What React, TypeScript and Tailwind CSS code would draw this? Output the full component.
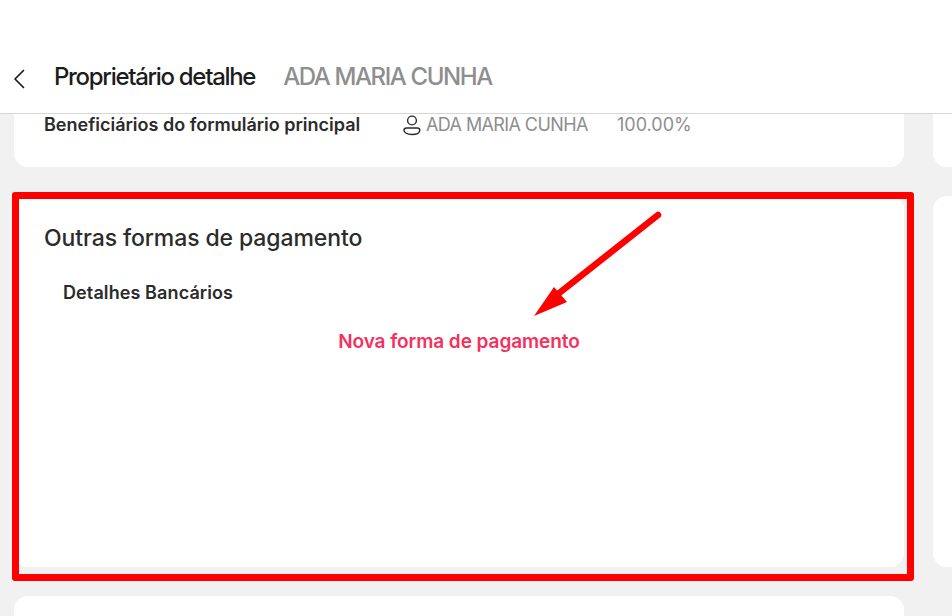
const font = "font-['Inter',sans-serif]";

const UserIcon = () => (
  <svg width="20" height="22" viewBox="0 0 20 22" fill="none" stroke="#2b2b2b" strokeWidth="1.4" className="shrink-0">
    <circle cx="10" cy="6.5" r="4.4" />
    <path d="M2 16.2c0-1.4 1-2.2 2.4-2.2h11c1.4 0 2.400.8 2.400 2.200 0 2.400-2.900 4.300-7.900 4.300s-7.900-1.900-7.900-4.300z" />
  </svg>
);

const BackIcon = () => (
  <svg width="12" height="20" viewBox="0 0 12 20" fill="none" stroke="#1c1c1c" strokeWidth="1.7" strokeLinecap="round" strokeLinejoin="round" className="mb-[2px]">
    <path d="M10.500 1.500 2 10l8.500 8.500" />
  </svg>
);

const Annotation = () => (
  <>
    <div className="absolute left-[-2px] right-[-10px] top-[-4px] bottom-[-14px] border-[7px] border-[#ff0000] rounded-[3px] pointer-events-none" />
    <svg className="absolute left-[491px] top-[4px] pointer-events-none" width="170" height="130" viewBox="0 0 170 130" fill="none">
      <path d="M153 15 53 94" stroke="#ff0000" strokeWidth="6.500" strokeLinecap="round" />
      <path d="M29 116 49 87 62 102z" fill="#ff0000" />
    </svg>
  </>
);

export default function App() {
  return (
    <div className={`${font} w-[952px] h-[616px] overflow-hidden bg-[#f1f1f1] flex flex-col`}>
      <header className="h-[114px] shrink-0 bg-white border-b border-[#d6d6d6] flex items-end pb-[22px] pl-[13px]">
        <BackIcon />
        <h1 className="ml-[29px] text-[24px] leading-[28px] font-medium tracking-[-1.3px] text-[#1c1c1c]">
          Proprietário detalhe
        </h1>
        <span className="ml-[28px] text-[24px] leading-[28px] font-medium tracking-[-1.4px] text-[#8e8e8e]">
          ADA MARIA CUNHA
        </span>
      </header>

      <div className="flex gap-[29px] pl-[14px] flex-1 min-h-0">
        <div className="w-[890px] shrink-0 flex flex-col gap-[29px]">
          <section className="h-[53px] shrink-0 bg-white rounded-b-[14px] flex items-start pl-[30px]">
            <span className="text-[18px] leading-[22px] font-semibold text-[#2b2b2b] w-[358px]">
              Beneficiários do formulário principal
            </span>
            <UserIcon />
            <span className="ml-[4px] text-[18px] leading-[22px] tracking-[-0.6px] text-[#8e8e8e] w-[191px]">
              ADA MARIA CUNHA
            </span>
            <span className="text-[18px] leading-[22px] text-[#8e8e8e]">100.00%</span>
          </section>

          <section className="relative h-[371px] shrink-0 bg-white rounded-[14px] pt-[28px] pl-[30px]">
            <h2 className="text-[23px] leading-[28px] font-medium tracking-[-0.1px] text-[#2b2b2b]">
              Outras formas de pagamento
            </h2>
            <p className="mt-[30px] ml-[19px] text-[18px] leading-[22px] font-semibold tracking-[0.1px] text-[#2b2b2b]">
              Detalhes Bancários
            </p>
            <p className="mt-[26px] -ml-[30px] text-center text-[19px] leading-[24px] font-semibold tracking-[-0.06px] text-[#f5305c]">
              Nova forma de pagamento
            </p>
            <Annotation />
          </section>

          <section className="h-[60px] shrink-0 bg-white rounded-t-[14px]" />
        </div>

        <div className="flex-1 flex flex-col gap-[29px]">
          <div className="h-[53px] shrink-0 bg-white rounded-bl-[14px]" />
          <div className="h-[371px] shrink-0 bg-white rounded-l-[14px]" />
        </div>
      </div>
    </div>
  );
}
